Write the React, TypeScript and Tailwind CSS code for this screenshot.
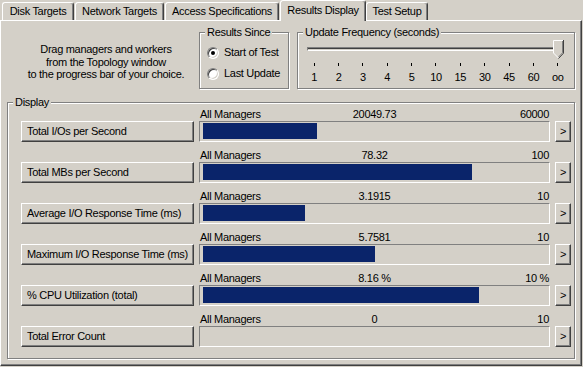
const tabs = [
  { label: "Disk Targets", cls: "ml-[2px] w-[72px]" },
  { label: "Network Targets", cls: "ml-[1px] w-[89px]" },
  { label: "Access Specifications", cls: "ml-[1px] w-[114px]" },
  { label: "Results Display", cls: "ml-[1px] w-[86px]", active: true },
  { label: "Test Setup", cls: "w-[62px]" },
];

const ticks = ["1", "2", "3", "4", "5", "10", "15", "30", "45", "60", "oo"];

const rows = [
  { name: "Total I/Os per Second", value: "20049.73", max: "60000", fill: 114 },
  { name: "Total MBs per Second", value: "78.32", max: "100", fill: 269 },
  { name: "Average I/O Response Time (ms)", value: "3.1915", max: "10", fill: 102 },
  { name: "Maximum I/O Response Time (ms)", value: "5.7581", max: "10", fill: 172 },
  { name: "% CPU Utilization (total)", value: "8.16 %", max: "10 %", fill: 276 },
  { name: "Total Error Count", value: "0", max: "10", fill: 0 },
];

const raised =
  "border border-t-white border-l-white border-r-[#404040] border-b-[#404040] shadow-[inset_-1px_-1px_0_#808080]";
const sunken = "border border-t-[#808080] border-l-[#808080] border-r-white border-b-white";
const etched = "relative border border-[#808080] shadow-[inset_1px_1px_0_#fff,1px_1px_0_#fff]";

function GroupTitle({ children }: { children: React.ReactNode }) {
  return (
    <span className="absolute -top-[7px] left-[5px] bg-[#d4d0c8] px-[2px] leading-[13px] whitespace-nowrap">
      {children}
    </span>
  );
}

function Radio({ checked, label }: { checked?: boolean; label: string }) {
  return (
    <div className="flex h-[13px] items-center">
      <span className="flex h-[12px] w-[12px] items-center justify-center rounded-full border border-[#808080] border-r-white border-b-white bg-white shadow-[inset_1px_1px_0_#404040,inset_-1px_-1px_0_#d4d0c8]">
        {checked && <span className="h-[4px] w-[4px] rounded-full bg-black" />}
      </span>
      <span className="ml-[5px] leading-[13px]">{label}</span>
    </div>
  );
}

function Thumb() {
  return (
    <svg width="11" height="19" viewBox="0 0 11 19" className="absolute left-[255px] top-0">
      <polygon points="0,0 11,0 11,13 5.5,18.5 0,13" fill="#d4d0c8" />
      <polyline points="0.5,13 0.5,0.5 10,0.5" fill="none" stroke="#fff" />
      <line x1="0.5" y1="13" x2="5.5" y2="18" stroke="#fff" />
      <polyline points="10.5,0 10.5,13.2 5.5,18.5" fill="none" stroke="#404040" />
      <polyline points="9.5,1 9.5,12.8 5.5,17" fill="none" stroke="#808080" />
    </svg>
  );
}

export default function App() {
  return (
    <div
      className="h-[367px] w-[583px] overflow-hidden bg-[#d4d0c8] text-[11px] tracking-[-0.3px] text-black"
      style={{ fontFamily: '"Liberation Sans", Arial, sans-serif' }}
    >
      {/* tab strip */}
      <div className="flex h-[20px] items-end">
        {tabs.map((t) =>
          t.active ? (
            <div
              key={t.label}
              className={`${t.cls} relative z-10 -mb-px flex h-[21px] items-center justify-center rounded-t-[3px] border-t border-l border-r border-t-white border-l-white border-r-[#404040] bg-[#d4d0c8] pb-[1px] shadow-[inset_-1px_0_0_#808080]`}
            >
              {t.label}
            </div>
          ) : (
            <div
              key={t.label}
              className={`${t.cls} flex h-[18px] items-center justify-center rounded-t-[3px] border-t border-l border-r border-t-white border-l-white border-r-[#404040] shadow-[inset_-1px_0_0_#808080]`}
            >
              {t.label}
            </div>
          )
        )}
      </div>

      {/* page */}
      <div className="h-[346px] w-[582px] border border-t-white border-l-white border-r-[#404040] border-b-[#404040] shadow-[inset_-1px_-1px_0_#808080]">
        <div className="mt-[11px] flex h-[57px]">
          <div className="w-[198px] pl-[12px] pt-[11px] text-center leading-[12.5px]">
            <div>Drag managers and workers</div>
            <div>from the Topology window</div>
            <div>to the progress bar of your choice.</div>
          </div>

          <div className={`${etched} h-[57px] w-[90px]`}>
            <GroupTitle>Results Since</GroupTitle>
            <div className="flex flex-col gap-[8px] pl-[7px] pt-[13px]">
              <Radio checked label="Start of Test" />
              <Radio label="Last Update" />
            </div>
          </div>

          <div className={`${etched} ml-[8px] h-[57px] w-[278px]`}>
            <GroupTitle>Update Frequency (seconds)</GroupTitle>
            <div className="relative mt-[7px] h-[19px]">
              <div className="absolute left-[9px] top-[7px] h-[4px] w-[254px] border border-t-[#808080] border-l-[#808080] border-r-white border-b-white bg-[#404040] shadow-[inset_0_-1px_0_#d4d0c8]" />
              <Thumb />
            </div>
            <div className="ml-[4px] mt-[4px] grid w-[268px] grid-cols-11">
              {ticks.map((t) => (
                <div key={t} className="flex flex-col items-center">
                  <span className="h-[3px] w-px bg-black" />
                  <span className="mt-[5px] leading-[13px]">{t}</span>
                </div>
              ))}
            </div>
          </div>
        </div>

        {/* display */}
        <div className={`${etched} ml-[6px] mt-[13px] h-[257px] w-[568px]`}>
          <GroupTitle>Display</GroupTitle>
          <div className="flex flex-col gap-[7px] pl-[13px] pt-[5px]">
            {rows.map((r) => (
              <div key={r.name} className="flex items-end">
                <div className={`${raised} flex h-[21px] w-[173px] items-center pl-[5px] whitespace-nowrap`}>
                  {r.name}
                </div>
                <div className="ml-[5px] flex w-[351px] flex-col">
                  <div className="grid h-[13px] grid-cols-3 leading-[13px]">
                    <span className="pl-[1px]">All Managers</span>
                    <span className="text-center">{r.value}</span>
                    <span className="pr-[1px] text-right">{r.max}</span>
                  </div>
                  <div className={`${sunken} h-[21px] pl-[3px] pt-[1px]`}>
                    <div className="h-[16px] bg-[#0a246a]" style={{ width: r.fill }} />
                  </div>
                </div>
                <div className={`${raised} ml-[5px] flex h-[21px] w-[16px] items-center justify-center`}>
                  &gt;
                </div>
              </div>
            ))}
          </div>
        </div>
      </div>
    </div>
  );
}
